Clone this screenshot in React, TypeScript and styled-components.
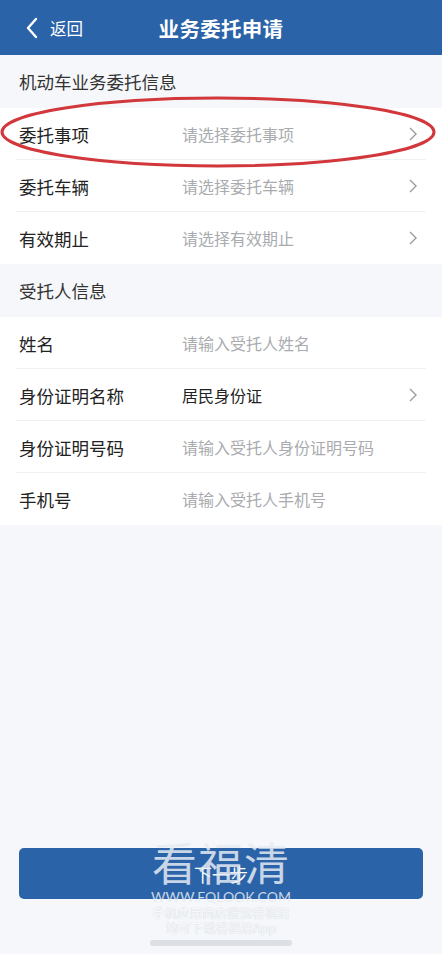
import React from "react";
import styled, { createGlobalStyle } from "styled-components";

const GlobalStyle = createGlobalStyle`
    html, body {
        margin: 0;
        padding: 0;
        background: #f5f7fa;
        font-family: "Noto Sans CJK SC", "Noto Sans", sans-serif;
    }
`;

const Page = styled.div`
    position: relative;
    width: 442px;
    height: 954px;
    display: flex;
    flex-direction: column;
    background: #f5f7fa;
    overflow: hidden;
`;

const Header = styled.div`
    height: 55px;
    background: #2b63a8;
    display: grid;
    grid-template-columns: 1fr auto 1fr;
    align-items: center;
    color: #fff;
`;

const Back = styled.div`
    display: flex;
    align-items: center;
    gap: 11px;
    padding-left: 25px;
    font-size: 16.5px;
`;

const Title = styled.div`
    font-size: 20.5px;
    font-weight: 700;
    letter-spacing: 0.3px;
`;

const SectionTitle = styled.div`
    height: 53px;
    display: flex;
    align-items: center;
    padding-left: 19px;
    font-size: 17.5px;
    color: #333;
`;

const Group = styled.div`
    background: #fff;
    display: flex;
    flex-direction: column;
`;

const Row = styled.div<{ $last?: boolean }>`
    position: relative;
    height: 52px;
    display: flex;
    align-items: center;
    padding: 0 24px 0 19px;
    box-sizing: border-box;

    &::after {
        content: "";
        display: ${(p) => (p.$last ? "none" : "block")};
        position: absolute;
        left: 16px;
        right: 16px;
        bottom: 0;
        height: 1px;
        background: #f0f1f3;
    }
`;

const Label = styled.div`
    width: 163px;
    font-size: 17.5px;
    color: #222;
`;

const Value = styled.div<{ $filled?: boolean }>`
    flex: 1;
    font-size: 16px;
    color: ${(p) => (p.$filled ? "#222" : "#a9abaf")};
`;

const Spacer = styled.div`
    flex: 1;
`;

const Footer = styled.div`
    padding: 0 19px 55px;
    display: flex;
    flex-direction: column;
    align-items: center;
`;

const NextButton = styled.button`
    width: 100%;
    height: 51px;
    border: none;
    border-radius: 5px;
    background: #2b63a8;
    color: #fff;
    font-family: inherit;
    font-size: 18px;
`;

const HomeBar = styled.div`
    position: absolute;
    left: 150px;
    bottom: 8px;
    width: 142px;
    height: 6px;
    border-radius: 3px;
    background: #dcdfe3;
`;

const Ring = styled.svg`
    position: absolute;
    left: 0;
    top: 94px;
    pointer-events: none;
`;

const Watermark = styled.div`
    position: absolute;
    left: 0;
    right: 0;
    top: 836px;
    display: flex;
    flex-direction: column;
    align-items: center;
    color: rgba(230, 236, 244, 0.85);
    pointer-events: none;
`;

const MarkBig = styled.div`
    font-size: 45px;
    line-height: 52px;
    letter-spacing: 1px;
`;

const MarkUrl = styled.div`
    font-family: "Lato", "Open Sans", sans-serif;
    font-size: 14px;
    line-height: 17px;
`;

const MarkSmall = styled.div`
    font-size: 12.5px;
    line-height: 15px;
    color: rgba(255, 255, 255, 0.9);
    text-shadow: 0 0 1px #b8c0cc;
`;

const Chevron = () => (
    <svg width="10" height="16" viewBox="0 0 10 16">
        <path d="M2 2l6 6-6 6" fill="none" stroke="#9a9ca0" strokeWidth="1.4" />
    </svg>
);

type Item = { label: string; value: string; filled?: boolean; arrow?: boolean };

const vehicleItems: Item[] = [
    { label: "委托事项", value: "请选择委托事项", arrow: true },
    { label: "委托车辆", value: "请选择委托车辆", arrow: true },
    { label: "有效期止", value: "请选择有效期止", arrow: true },
];

const personItems: Item[] = [
    { label: "姓名", value: "请输入受托人姓名" },
    { label: "身份证明名称", value: "居民身份证", filled: true, arrow: true },
    { label: "身份证明号码", value: "请输入受托人身份证明号码" },
    { label: "手机号", value: "请输入受托人手机号" },
];

const FormGroup: React.FC<{ items: Item[] }> = ({ items }) => (
    <Group>
        {items.map((it, i) => (
            <Row key={it.label} $last={i === items.length - 1}>
                <Label>{it.label}</Label>
                <Value $filled={it.filled}>{it.value}</Value>
                {it.arrow && <Chevron />}
            </Row>
        ))}
    </Group>
);

export default function App() {
    return (
        <>
            <GlobalStyle />
            <Page>
                <Header>
                    <Back>
                        <svg width="14" height="22" viewBox="0 0 14 22">
                            <path d="M11 2L3 11l8 9" fill="none" stroke="#fff" strokeWidth="2.4" strokeLinecap="round" strokeLinejoin="round" />
                        </svg>
                        返回
                    </Back>
                    <Title>业务委托申请</Title>
                    <div />
                </Header>
                <SectionTitle>机动车业务委托信息</SectionTitle>
                <FormGroup items={vehicleItems} />
                <SectionTitle>受托人信息</SectionTitle>
                <FormGroup items={personItems} />
                <Spacer />
                <Footer>
                    <NextButton>下一步</NextButton>
                </Footer>
                <HomeBar />
                <Ring width="442" height="80" viewBox="0 0 442 80">
                    <ellipse cx="218" cy="38" rx="216" ry="34" fill="none" stroke="#d2373c" strokeWidth="3" />
                </Ring>
                <Watermark>
                    <MarkBig>看福清</MarkBig>
                    <MarkUrl>WWW.FQLOOK.COM</MarkUrl>
                    <MarkSmall>手机应用商店搜索看福清</MarkSmall>
                    <MarkSmall>均可下载看福清App</MarkSmall>
                </Watermark>
            </Page>
        </>
    );
}
